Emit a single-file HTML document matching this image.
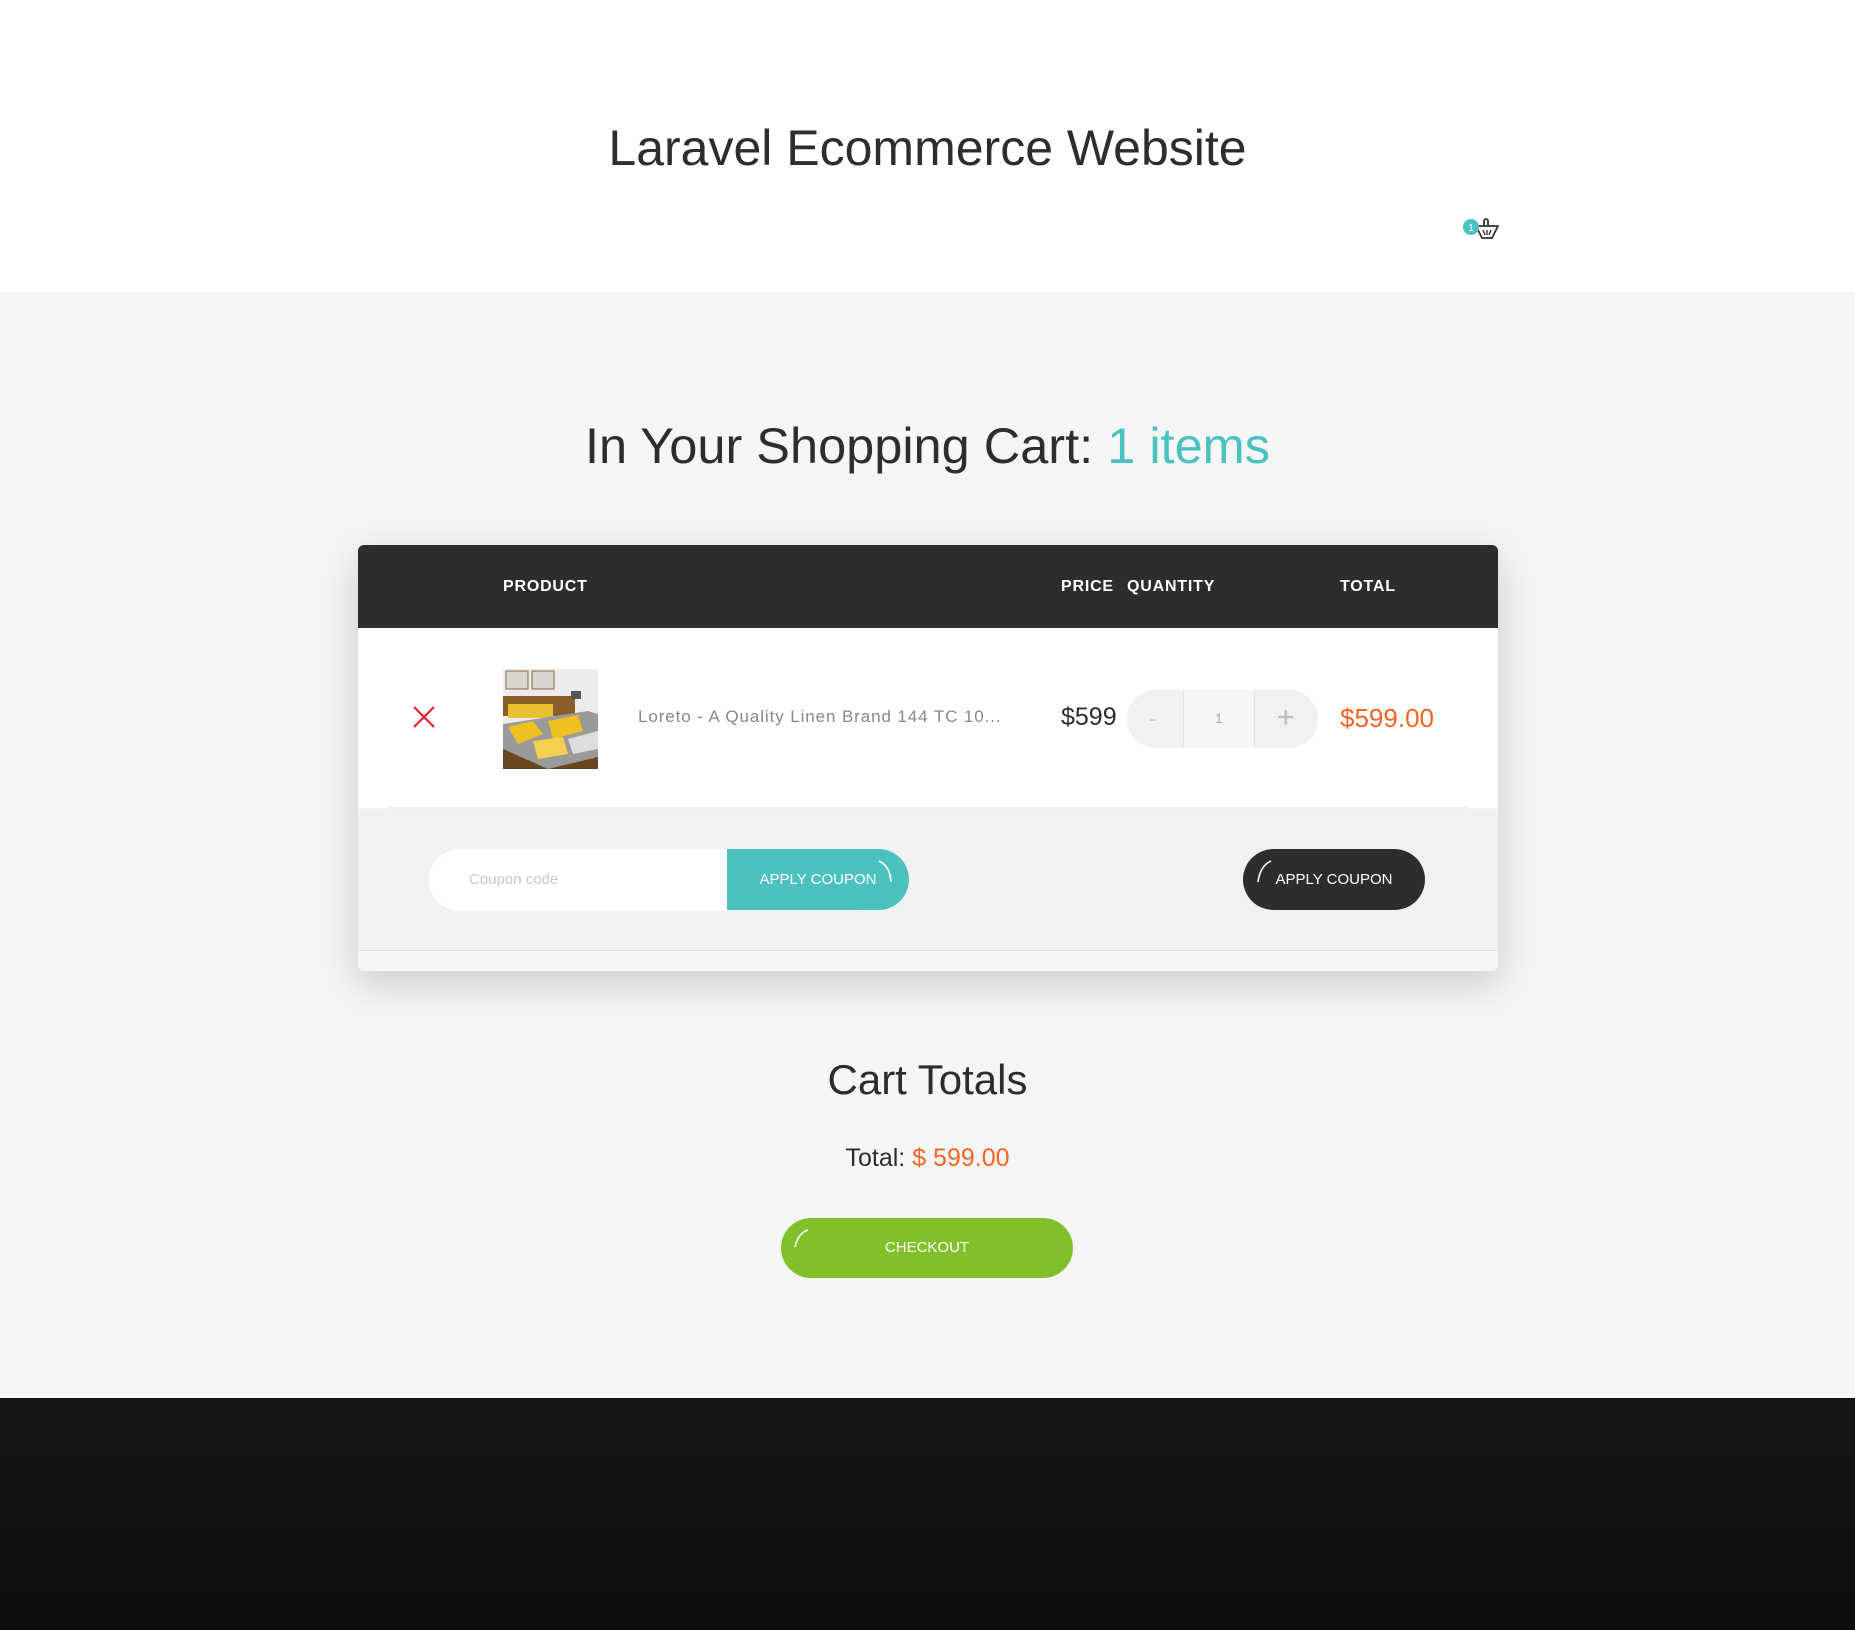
<!DOCTYPE html>
<html><head><meta charset="utf-8"><style>
*{box-sizing:border-box;margin:0;padding:0}
body{width:1855px;height:1630px;overflow:hidden;background:#f5f6f5;font-family:"Liberation Sans",sans-serif;color:#2e2d2c;position:relative}
.a{position:absolute}
.hdr{left:0;top:0;width:1855px;height:292px;background:#fff}
.c{text-align:center}
.card{left:358px;top:545px;width:1140px;height:426px;background:#f5f6f5;border-radius:6px;box-shadow:0 12px 40px rgba(0,0,0,.18);overflow:hidden}
.th{font-size:16px;font-weight:bold;color:#fff;letter-spacing:.8px;top:578px}
.btn{border-radius:31px;color:#fff;font-size:15px;text-align:center}
</style></head><body>
<div class="a hdr"></div>
<div class="a c" style="left:0;width:1855px;top:119px;font-size:50px;color:#2e2d2c">Laravel Ecommerce Website</div>
<svg class="a" style="left:1462px;top:216px" width="40" height="28" viewBox="0 0 40 28">
<path d="M14 10 L36 10 L30 22 L20 22 Z" fill="none" stroke="#333" stroke-width="1.8" stroke-linejoin="round"/>
<path d="M22 10 V5 a2 2 0 0 1 4 0 V10" fill="none" stroke="#333" stroke-width="1.8"/>
<path d="M21 14 l2 5 M25 14 v5 M29 14 l-2 5" stroke="#333" stroke-width="1.4"/>
<circle cx="9" cy="11" r="8" fill="#4cc2c0"/><text x="9" y="15" font-size="10" fill="#fff" text-anchor="middle" font-family="Liberation Sans">1</text></svg>
<div class="a c" style="left:0;width:1855px;top:416px;font-size:50.5px">In Your Shopping Cart: <span style="color:#4cc2c0">1 items</span></div>
<div class="a card">
 <div class="a" style="left:0;top:0;width:1140px;height:83px;background:#2e2d2c"></div>
 <div class="a" style="left:0;top:83px;width:1140px;height:180px;background:#fff"></div>
 <div class="a" style="left:30px;top:262px;width:1080px;height:2px;background:#eef0ef"></div>
 <div class="a" style="left:0;top:264px;width:1140px;height:142px;background:#f0f2f1;border-bottom:1px solid #dfe1e0"></div>
</div>
<div class="a th" style="left:503px">PRODUCT</div>
<div class="a th" style="left:1061px">PRICE</div>
<div class="a th" style="left:1127px">QUANTITY</div>
<div class="a th" style="left:1340px">TOTAL</div>
<svg class="a" style="left:412px;top:705px" width="24" height="24"><path d="M2 2L22 22M22 2L2 22" stroke="#e8202a" stroke-width="2.2"/></svg>
<svg class="a" style="left:503px;top:669px" width="95" height="100" viewBox="0 0 95 100">
<rect width="95" height="100" fill="#eeeceb"/>
<rect x="3" y="2" width="22" height="18" fill="#d9d6d0" stroke="#8a6a3a"/><rect x="29" y="2" width="22" height="18" fill="#d9d6d0" stroke="#8a6a3a"/>
<rect x="0" y="27" width="72" height="20" fill="#8a5e2a"/>
<rect x="68" y="22" width="10" height="8" fill="#555"/>
<rect x="5" y="35" width="45" height="14" fill="#e8c030"/>
<polygon points="0,55 85,42 95,45 95,92 45,100 0,85" fill="#9a9a9a"/>
<polygon points="5,58 30,52 40,65 15,75" fill="#f0c020"/><polygon points="45,52 75,46 80,62 50,70" fill="#f0c020"/>
<polygon points="30,72 60,68 65,85 35,90" fill="#f5d050"/><polygon points="65,70 95,62 95,80 70,85" fill="#ddd"/>
<polygon points="0,80 45,100 0,100" fill="#6b4520"/><polygon points="45,100 95,88 95,100" fill="#6b4520"/>
</svg>
<div class="a" style="left:638px;top:707px;font-size:17px;color:#888;letter-spacing:.9px">Loreto - A Quality Linen Brand 144 TC 10...</div>
<div class="a" style="left:1061px;top:703px;font-size:25px">$599</div>
<div class="a" style="left:1127px;top:690px;width:191px;height:58px;border-radius:29px;background:#f0f1f0;overflow:hidden">
 <div class="a" style="left:56px;top:0;width:72px;height:58px;background:#f5f6f5;border-left:1px solid #e2e4e3;border-right:1px solid #e2e4e3"></div>
 <div class="a" style="left:22px;top:16px;font-size:22px;color:#ccc">-</div>
 <div class="a" style="left:88px;top:20px;font-size:14px;color:#aaa">1</div>
 <div class="a" style="left:150px;top:11px;font-size:30px;color:#bbb;font-weight:300">+</div>
</div>
<div class="a" style="left:1340px;top:703px;font-size:26px;color:#f26522">$599.00</div>
<div class="a" style="left:429px;top:849px;width:460px;height:62px;border-radius:31px;background:#fff"></div>
<div class="a" style="left:469px;top:871px;font-size:15px;color:#c8c8c8">Coupon code</div>
<div class="a btn" style="left:727px;top:849px;width:182px;height:61px;background:#4cc2c0;border-radius:0 31px 31px 0;line-height:61px">APPLY COUPON</div>
<svg class="a" style="left:876px;top:858px" width="22" height="30"><path d="M3 3 Q14 8 15 24" fill="none" stroke="#fff" stroke-width="1.6"/></svg>
<div class="a btn" style="left:1243px;top:849px;width:182px;height:61px;background:#2e2d2c;line-height:61px">APPLY COUPON</div>
<svg class="a" style="left:1253px;top:858px" width="22" height="30"><path d="M18 3 Q7 8 5 24" fill="none" stroke="#fff" stroke-width="1.6"/></svg>
<div class="a c" style="left:0;width:1855px;top:1056px;font-size:42px">Cart Totals</div>
<div class="a c" style="left:0;width:1855px;top:1144px;font-size:25px">Total: <span style="color:#f26522">$ 599.00</span></div>
<div class="a btn" style="left:781px;top:1218px;width:292px;height:60px;background:#82c02b;line-height:60px">CHECKOUT</div>
<svg class="a" style="left:790px;top:1227px" width="22" height="30"><path d="M18 3 Q8 6 5 20" fill="none" stroke="#fff" stroke-width="1.6"/></svg>
<div class="a" style="left:0;top:1398px;width:1855px;height:232px;background:linear-gradient(#151515,#0e0e0e)"></div>
</body></html>
